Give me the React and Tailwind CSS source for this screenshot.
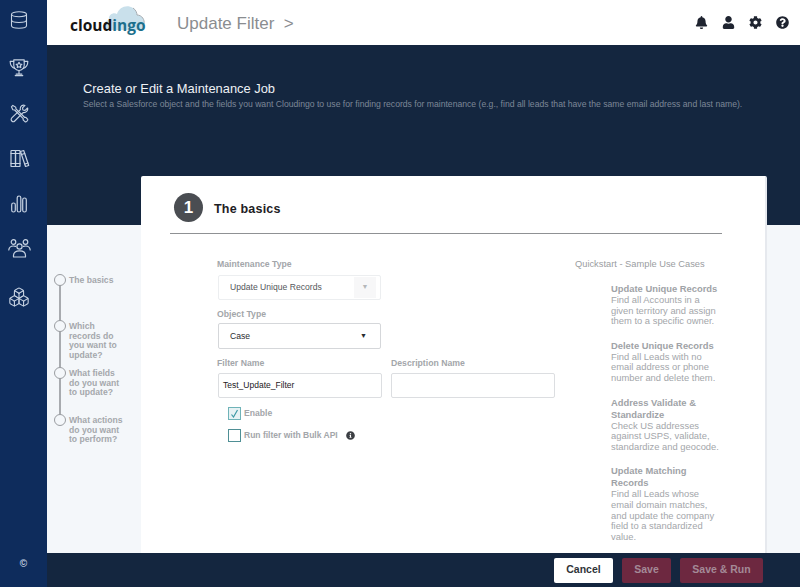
import { Database, Boxes } from "lucide-react"
import { FaBell, FaUser, FaCog, FaQuestionCircle, FaInfoCircle } from "react-icons/fa"

const FONT = { fontFamily: '"Liberation Sans", Arial, sans-serif' }

const STEPS = [
  { lines: ["The basics"], h: "h-[46px]" },
  { lines: ["Which", "records do", "you want to", "update?"], h: "h-[47px]" },
  { lines: ["What fields", "do you want", "to update?"], h: "h-[47px]" },
  { lines: ["What actions", "do you want", "to perform?"], h: "h-[47px]" },
]

const USE_CASES = [
  { title: ["Update Unique Records"], body: ["Find all Accounts in a", "given territory and assign", "them to a specific owner."] },
  { title: ["Delete Unique Records"], body: ["Find all Leads with no", "email address or phone", "number and delete them."] },
  { title: ["Address Validate &", "Standardize"], body: ["Check US addresses", "against USPS, validate,", "standardize and geocode."] },
  { title: ["Update Matching", "Records"], body: ["Find all Leads whose", "email domain matches,", "and update the company", "field to a standardized", "value."] },
]

function TrophyIcon() {
  return (
    <svg width="20" height="19" viewBox="0 0 21 20" fill="none" stroke="currentColor" strokeWidth="1.2" strokeLinecap="round" strokeLinejoin="round">
      <path d="M5 2h11v5.500c0 3.200-2.400 5.700-5.500 5.700S5 10.700 5 7.500z" />
      <path d="M5 3.500H1.200c0 4 1.300 6.500 5 7.500M16 3.500h3.800c0 4-1.300 6.500-5 7.500" />
      <path d="M10.500 13.500v3.500M6.500 18.500h8M7.500 17h6" />
      <path d="M10.500 4.500l1 1.900 2 .3-1.500 1.400.4 2-1.900-1-1.900 1 .4-2L7.500 6.700l2-.3z" />
    </svg>
  )
}

function ToolsIcon() {
  return (
    <svg width="19" height="19" viewBox="0 0 20 20" fill="none" stroke="currentColor" strokeWidth="1.2" strokeLinecap="round" strokeLinejoin="round">
      <path d="M1.500 3l1.500-1.500 3 1.800.3 1.900 9.200 9 1.200-.2 2 2.300c.3 1-1.600 2.900-2.700 2.500l-2.200-2.100.1-1.200-9-9.200-1.900-.3z" />
      <path d="M18.500 4.200l-2.600 2.500-2.300-.4-.4-2.300 2.500-2.500c-2.500-.9-5 .8-4.900 3.500l.1 1-9 8.700c-1.100 1.100-.7 2.500 0 3.200s2.100 1 3.100 0l8.800-8.900c3 .6 5.500-2.200 4.700-4.800z" />
    </svg>
  )
}

function BooksIcon() {
  return (
    <svg width="20" height="19" viewBox="0 0 20 19" fill="none" stroke="currentColor" strokeWidth="1.2" strokeLinecap="round" strokeLinejoin="round">
      <rect x="1" y="1.500" width="4.500" height="16" rx=".6" />
      <rect x="5.500" y="1.500" width="4.500" height="16" rx=".6" />
      <path d="M1 4.500h9M1 14.500h9" />
      <path d="M10.500 2.500l3.200-1 5 15-3.200 1z" />
      <path d="M11.500 5.500l3.200-1M15 15l3-1" />
    </svg>
  )
}

function BarsIcon() {
  return (
    <svg width="16" height="18" viewBox="0 0 16 18" fill="none" stroke="currentColor" strokeWidth="1.2">
      <rect x=".7" y="8" width="3.600" height="9" rx="1.800" />
      <rect x="6.200" y="1" width="3.600" height="16" rx="1.800" />
      <rect x="11.700" y="3" width="3.600" height="14" rx="1.800" />
    </svg>
  )
}

function TeamIcon() {
  return (
    <svg width="23" height="19" viewBox="0 0 23 19" fill="none" stroke="currentColor" strokeWidth="1.2" strokeLinecap="round" strokeLinejoin="round">
      <circle cx="5.500" cy="3" r="2.300" />
      <circle cx="17.500" cy="3" r="2.300" />
      <circle cx="11.500" cy="7.500" r="2.600" />
      <path d="M.8 11c.3-3 2-4 4.700-4 .8 0 1.400.1 2 .4M22.200 11c-.3-3-2-4-4.700-4-.8 0-1.400.1-2 .4" />
      <path d="M5.500 18v-1.500c0-3 2.500-4.700 6-4.700s6 1.700 6 4.700V18z" />
    </svg>
  )
}

function CloudingoLogo() {
  return (
    <div className="relative w-[78px] h-[30px]">
      <svg className="absolute left-[33px] top-[-4px]" width="44" height="28" viewBox="0 0 44 28">
        <path d="M4 26C-1 26 0 17 6 16c-1-5 4-8 8-6C16 3 24 0 30 4c3 2 4 5 4 7 5 0 8 5 7 9-1 4-2 6-6 6z" fill="#c9e0eb" />
        <path d="M30 4c3 2 4 5 4 7 5 0 8 5 7 9" fill="none" stroke="#a7adb2" strokeWidth="1" />
      </svg>
      <span className="absolute left-0 top-[7px] text-[15.500px] leading-[20px] font-bold whitespace-nowrap" style={{ fontFamily: '"Open Sans", sans-serif' }}>
        <span className="text-[#151515]">cloud</span>
        <span className="text-[#1d6f8c]">ingo</span>
      </span>
    </div>
  )
}

function FieldLabel({ children }) {
  return <div className="text-[8.700px] leading-[11px] font-bold text-[#a3a6aa] whitespace-nowrap">{children}</div>
}

export default function App() {
  return (
    <div className="w-[800px] h-[587px] flex overflow-hidden bg-[#f4f7fa]" style={FONT}>
      {/* Sidebar */}
      <aside className="w-[47px] shrink-0 bg-[#0e2c5c] text-[#c6d2e2] flex flex-col">
        <div className="h-[44px] w-[38px] flex items-center justify-center">
          <Database size={20} strokeWidth={1.3} className="mt-[-4px]" />
        </div>
        <div className="h-[46px] w-[38px] flex items-center justify-center"><TrophyIcon /></div>
        <div className="h-[46px] w-[38px] flex items-center justify-center"><ToolsIcon /></div>
        <div className="h-[44px] w-[39px] flex items-center justify-center"><BooksIcon /></div>
        <div className="h-[48px] w-[38px] flex items-center justify-center"><BarsIcon /></div>
        <div className="h-[40px] w-[39px] flex items-center justify-center"><TeamIcon /></div>
        <div className="h-[58px] w-[38px] flex items-center justify-center"><Boxes size={22} strokeWidth={1.2} /></div>
        <div className="mt-auto mb-[16px] text-center text-[10px] leading-[14px] font-bold text-[#c6d2e2]">©</div>
      </aside>

      <div className="flex-1 flex flex-col min-w-0">
        {/* Top bar */}
        <header className="h-[45px] shrink-0 bg-white flex items-center pl-[23px] pr-[11px]">
          <CloudingoLogo />
          <div className="ml-[29px] mt-[2px] text-[17px] text-[#8a8d90] whitespace-nowrap">Update Filter&nbsp;&nbsp;&gt;</div>
          <div className="ml-auto flex items-center gap-[14px] text-[#1f2430]">
            <FaBell size={13} />
            <FaUser size={13} />
            <FaCog size={13} />
            <FaQuestionCircle size={13} />
          </div>
        </header>

        {/* Hero band */}
        <section className="h-[180px] shrink-0 bg-[#14263f] pt-[36px] pl-[36px]">
          <h1 className="text-[12.900px] leading-[15px] text-[#eef1f5] font-normal">Create or Edit a Maintenance Job</h1>
          <p className="mt-[3px] text-[8.650px] leading-[11px] text-[#7d8797] whitespace-nowrap">
            Select a Salesforce object and the fields you want Cloudingo to use for finding records for maintenance (e.g., find all leads that have the same email address and last name).
          </p>
        </section>

        {/* Body */}
        <div className="flex-1 flex min-h-0">
          {/* Step rail */}
          <div className="w-[94px] shrink-0 pt-[49px] pl-[7px]">
            <div className="relative">
              <div className="absolute left-[5px] top-[6px] h-[135px] w-[2px] bg-[#a8abaf]" />
              {STEPS.map(step => (
                <div key={step.lines[0]} className={`relative flex gap-[2px] ${step.h}`}>
                  <div className="w-[12px] h-[12px] rounded-full border border-[#9a9da1] bg-[#f4f7fa] shrink-0" />
                  <div className="text-[8.600px] leading-[9.700px] font-bold text-[#a5a8ac] whitespace-nowrap pt-[2px] pl-[1px]">
                    {step.lines.map(l => <div key={l}>{l}</div>)}
                  </div>
                </div>
              ))}
            </div>
          </div>

          {/* Card */}
          <main className="w-[626px] shrink-0 -mt-[49px] relative bg-white rounded-t-[2px] border-r-2 border-r-[#e6e9ee] pl-[29px] pr-[43px] pt-[17px] overflow-hidden">
            <div className="flex items-center gap-[11px] pl-[4px] h-[29px]">
              <div className="w-[29px] h-[29px] rounded-full bg-[#4a4d52] text-white text-[17px] font-bold flex items-center justify-center">1</div>
              <div className="pt-[4px] text-[12.500px] font-bold text-[#1d2024] tracking-[0.2px]">The basics</div>
            </div>
            <div className="mt-[11px] h-px bg-[#8f9194]" />

            <div className="flex mt-[25px]">
              {/* Form */}
              <div className="w-[405px] shrink-0 pl-[47px]">
                <FieldLabel>Maintenance Type</FieldLabel>
                <div className="mt-[5px] ml-[1px] w-[163px] h-[25px] border border-[#eceef0] rounded-[2px] flex items-center pl-[11px] pr-[4px] text-[8.600px] text-[#55585c]">
                  Update Unique Records
                  <div className="ml-auto w-[22px] h-[21px] bg-[#f7f7f8] flex items-center justify-center text-[#b5b7ba] text-[7px]">▼</div>
                </div>
                <div className="mt-[9px]"><FieldLabel>Object Type</FieldLabel></div>
                <div className="mt-[3px] ml-[1px] w-[163px] h-[26px] border border-[#d5d7da] rounded-[2px] flex items-center pl-[11px] pr-[13px] text-[8.600px] text-[#2a2c30]">
                  Case
                  <span className="ml-auto text-[7px] text-[#2a2c30]">▼</span>
                </div>
                <div className="mt-[9px] flex gap-[9px]">
                  <div>
                    <FieldLabel>Filter Name</FieldLabel>
                    <div className="mt-[4px] ml-[1px] w-[164px] h-[25px] border border-[#dcdee1] rounded-[2px] flex items-center pl-[4px] text-[8.500px] text-[#1d2024]">Test_Update_Filter</div>
                  </div>
                  <div>
                    <FieldLabel>Description Name</FieldLabel>
                    <div className="mt-[4px] w-[164px] h-[25px] border border-[#dcdee1] rounded-[2px]" />
                  </div>
                </div>
                <div className="mt-[9px] pl-[11px] flex items-center text-[8.600px] font-bold text-[#a3a6aa]">
                  <div className="w-[13px] h-[13px] border border-[#6fb3b8] bg-[#e7f2f4] flex items-center justify-center">
                    <svg width="9" height="9" viewBox="0 0 9 9" fill="none" stroke="#3f9aa6" strokeWidth="1.2"><path d="M1.500 5.500l2 2.500L7.500 1" /></svg>
                  </div>
                  <span className="ml-[3px]">Enable</span>
                </div>
                <div className="mt-[9px] pl-[11px] flex items-center text-[8.500px] font-bold text-[#a3a6aa]">
                  <div className="w-[13px] h-[13px] border border-[#4f8f95]" />
                  <span className="ml-[3px]">Run filter with Bulk API</span>
                  <FaInfoCircle size={9} className="ml-[8px] text-[#3c3f44]" />
                </div>
              </div>

              {/* Use cases */}
              <div className="flex-1 min-w-0">
                <div className="text-[9.300px] leading-[11px] text-[#9a9da1] whitespace-nowrap">Quickstart - Sample Use Cases</div>
                <div className="pl-[36px] mt-[13px] flex flex-col gap-[13px]">
                  {USE_CASES.map(c => (
                    <div key={c.title[0]} className="text-[9.400px] leading-[10.600px] text-[#a3a6aa] whitespace-nowrap">
                      {c.title.map(t => <div key={t} className="font-bold leading-[12px] text-[#a0a3a7]">{t}</div>)}
                      {c.body.map(b => <div key={b}>{b}</div>)}
                    </div>
                  ))}
                </div>
              </div>
            </div>
          </main>
        </div>

        {/* Footer */}
        <footer className="h-[34px] shrink-0 bg-[#14263f] flex items-center justify-end pr-[37px] gap-[9px] text-[10.500px] font-bold">
          <div className="w-[59px] h-[25px] bg-white rounded-[2px] text-[#2f3338] flex items-center justify-center">Cancel</div>
          <div className="w-[49px] h-[25px] bg-[#6d2840] rounded-[2px] text-[#a48a97] flex items-center justify-center">Save</div>
          <div className="w-[83px] h-[25px] bg-[#6d2840] rounded-[2px] text-[#a48a97] flex items-center justify-center">Save &amp; Run</div>
        </footer>
      </div>
    </div>
  )
}
